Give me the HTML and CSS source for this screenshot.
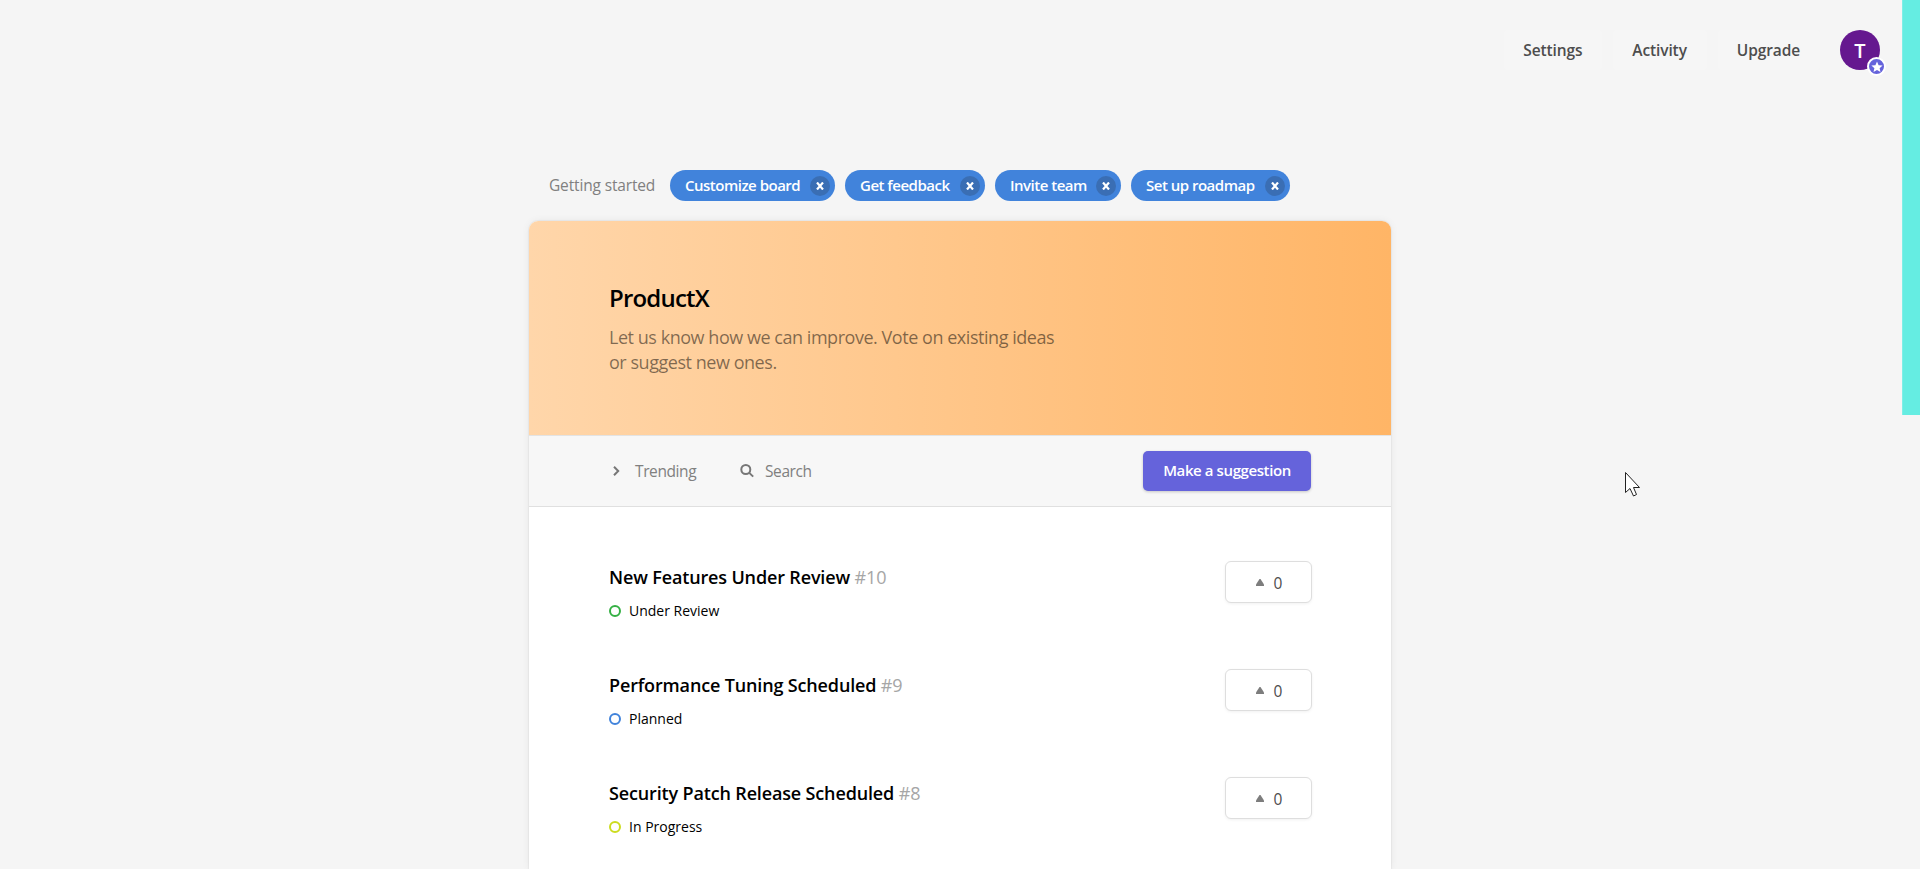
FILE: index.html
```html
<!DOCTYPE html>
<html lang="en">
  <head>
    <meta charset="UTF-8" />
    <meta name="viewport" content="width=device-width, initial-scale=1.0" />
    <title>ProductX</title>
    <link rel="stylesheet" href="styles.css" />
  </head>
  <body>
    <header class="topbar">
      <nav class="nav">
        <a class="nav-link">Settings</a>
        <a class="nav-link">Activity</a>
        <a class="nav-link">Upgrade</a>
      </nav>
      <div class="avatar">
        T
        <span class="avatar-badge">
          <svg viewBox="0 0 24 24" width="12" height="12">
            <path fill="#fff" d="M12 1l3.2 7.4 8 .7-6 5.3 1.8 7.8-7-4.1-7 4.1 1.8-7.8-6-5.3 8-.7z" />
          </svg>
        </span>
      </div>
    </header>

    <main class="page">
      <div class="started">
        <span class="started-label">Getting started</span>
        <button class="pill"><span class="pill-text customize">Customize board</span>
          <span class="pill-close"><svg viewBox="0 0 8 8" width="8" height="8"><path d="M1 0.5L7 7.5M7 0.5L1 7.5" /></svg></span>
        </button>
        <button class="pill"><span class="pill-text feedback">Get feedback</span>
          <span class="pill-close"><svg viewBox="0 0 8 8" width="8" height="8"><path d="M1 0.5L7 7.5M7 0.5L1 7.5" /></svg></span>
        </button>
        <button class="pill"><span class="pill-text invite">Invite team</span>
          <span class="pill-close"><svg viewBox="0 0 8 8" width="8" height="8"><path d="M1 0.5L7 7.5M7 0.5L1 7.5" /></svg></span>
        </button>
        <button class="pill"><span class="pill-text roadmap">Set up roadmap</span>
          <span class="pill-close"><svg viewBox="0 0 8 8" width="8" height="8"><path d="M1 0.5L7 7.5M7 0.5L1 7.5" /></svg></span>
        </button>
      </div>

      <section class="board">
        <div class="hero">
          <h1>ProductX</h1>
          <p>Let us know how we can improve. Vote on existing ideas<br />or suggest new ones.</p>
        </div>

        <div class="toolbar">
          <a class="tool trending">
            <svg viewBox="0 0 14 14" width="14" height="14"><path d="M5 2.8L9.2 7L5 11.2" /></svg>
            Trending
          </a>
          <a class="tool search">
            <svg viewBox="0 0 14 14" width="14" height="14"><circle cx="5.8" cy="5.5" r="4.5" /><path d="M9 8.6L13.2 12.6" /></svg>
            Search
          </a>
          <button class="suggest">Make a suggestion</button>
        </div>

        <ul class="posts">
          <li class="post">
            <div>
              <h2>New Features Under Review <span class="number">#10</span></h2>
              <div class="status review">Under Review</div>
            </div>
            <button class="vote"><svg viewBox="0 0 8 7" width="8" height="7"><path d="M3.5 0H4.5L8 5.5V7H0V5.5z" /></svg>0</button>
          </li>
          <li class="post">
            <div>
              <h2>Performance Tuning Scheduled <span class="number">#9</span></h2>
              <div class="status planned">Planned</div>
            </div>
            <button class="vote"><svg viewBox="0 0 8 7" width="8" height="7"><path d="M3.5 0H4.5L8 5.5V7H0V5.5z" /></svg>0</button>
          </li>
          <li class="post">
            <div>
              <h2>Security Patch Release Scheduled <span class="number">#8</span></h2>
              <div class="status progress">In Progress</div>
            </div>
            <button class="vote"><svg viewBox="0 0 8 7" width="8" height="7"><path d="M3.5 0H4.5L8 5.5V7H0V5.5z" /></svg>0</button>
          </li>
        </ul>
      </section>
    </main>

    <div class="side-strip"></div>
    <svg class="cursor" viewBox="0 0 16 25" width="16" height="25">
      <path d="M.5.5V20.5L5 16.5L8.5 24L11.5 22.5L8.5 15.5H14.5z" />
    </svg>
  </body>
</html>
```

FILE: styles.css
```css
* {
  box-sizing: border-box;
}

body {
  margin: 0;
  background: #f5f5f5;
  color: #000;
  font-family: "Open Sans", "Noto Sans", sans-serif;
  font-size: 15.5px;
}

button {
  border: none;
  font: inherit;
}

.topbar {
  display: flex;
  justify-content: flex-end;
  align-items: center;
  gap: 20px;
  height: 100px;
  padding-right: 40px;
}

.nav {
  display: flex;
  gap: 11px;
}

.nav-link {
  height: 40px;
  padding: 1px 20px 0 19px;
  border-radius: 4px;
  background: #f6f6f6;
  color: #4d4d4d;
  font-weight: 600;
  line-height: 39px;
  letter-spacing: -0.12px;
}

.avatar {
  position: relative;
  width: 40px;
  height: 40px;
  border-radius: 50%;
  background: #65188f;
  color: #fff;
  font-size: 20px;
  font-weight: 600;
  line-height: 42px;
  text-align: center;
}

.avatar-badge {
  position: absolute;
  right: -6px;
  bottom: -6px;
  display: flex;
  align-items: center;
  justify-content: center;
  width: 19px;
  height: 19px;
  border: 2px solid #fff;
  border-radius: 50%;
  background: #6563db;
}

.page {
  width: 862px;
  margin: 0 auto;
  padding-top: 70px;
}

.started {
  display: flex;
  align-items: center;
  gap: 10px;
  height: 31px;
  padding-left: 20px;
  margin-bottom: 20px;
}

.started-label {
  width: 111px;
  padding-bottom: 1px;
  color: #808080;
  letter-spacing: -0.15px;
  white-space: nowrap;
}

.pill {
  display: flex;
  align-items: center;
  gap: 10px;
  height: 31px;
  padding: 0 5px 0 15px;
  border-radius: 16px;
  background: #4183db;
  color: #fff;
  font-size: 15px;
  font-weight: 600;
  white-space: nowrap;
}

.pill-text {
  padding-bottom: 2px;
  letter-spacing: -0.5px;
  text-align: left;
}

.customize {
  width: 115px;
}

.feedback {
  width: 90px;
}

.invite {
  width: 76px;
}

.roadmap {
  width: 109px;
}

.pill-close {
  display: flex;
  align-items: center;
  justify-content: center;
  width: 20px;
  height: 20px;
  border-radius: 50%;
  background: #3a6eb4;
}

.pill-close path {
  fill: none;
  stroke: #fff;
  stroke-width: 2.2;
}

.board {
  height: 648px;
  border-radius: 9px 9px 0 0;
  background: #fff;
  box-shadow: 0 0 1px 1px rgba(0, 0, 0, 0.04), 0 0 8px rgba(0, 0, 0, 0.06);
  clip-path: inset(-10px -10px 0);
}

.hero {
  height: 214px;
  padding: 59px 80px 0;
  border-radius: 9px 9px 0 0;
  background: linear-gradient(to right, #ffd6aa, #ffb566);
}

.hero h1 {
  margin: 0;
  font-size: 24px;
  font-weight: 600;
  line-height: 36px;
  letter-spacing: -0.8px;
}

.hero p {
  margin: 9px 0 0;
  color: rgba(0, 0, 0, 0.5);
  font-size: 18px;
  line-height: 25px;
  letter-spacing: -0.46px;
}

.toolbar {
  display: flex;
  align-items: center;
  height: 72px;
  padding: 0 80px;
  border-top: 1px solid #e3e3e3;
  border-bottom: 1px solid #e0e0e0;
  background: #f7f7f7;
}

.tool {
  display: flex;
  align-items: center;
  gap: 12px;
  color: #808080;
  letter-spacing: -0.4px;
}

.tool svg {
  fill: none;
  stroke: #777;
  stroke-width: 2;
}

.trending {
  width: 131px;
}

.search {
  gap: 11px;
}

.suggest {
  width: 168px;
  height: 40px;
  margin-left: auto;
  padding: 0 0 2px;
  border-radius: 5px;
  background: #6563db;
  box-shadow: 0 1px 3px rgba(0, 0, 0, 0.2);
  color: #fff;
  font-size: 15px;
  font-weight: 600;
  letter-spacing: -0.4px;
}

.posts {
  display: flex;
  flex-direction: column;
  gap: 46px;
  margin: 0;
  padding: 54px 79px 0 80px;
  list-style: none;
}

.post {
  display: flex;
  justify-content: space-between;
  height: 62px;
}

.post h2 {
  margin: 3px 0 0;
  font-size: 18px;
  font-weight: 600;
  line-height: 26px;
  letter-spacing: -0.15px;
}

.number {
  color: #a6a6a6;
  font-weight: 400;
}

.status {
  display: flex;
  align-items: center;
  gap: 8px;
  margin-top: 11px;
  font-size: 14px;
  line-height: 20px;
}

.status::before {
  content: "";
  box-sizing: border-box;
  width: 12px;
  height: 12px;
  border: 2px solid;
  border-radius: 50%;
}

.review::before {
  border-color: #35b044;
}

.planned::before {
  border-color: #4183db;
}

.progress::before {
  border-color: #ccdc1f;
}

.vote {
  display: flex;
  align-items: center;
  justify-content: center;
  gap: 10px;
  width: 87px;
  height: 42px;
  padding: 1px 0 0 1px;
  border: 1px solid #dedede;
  border-radius: 6px;
  background: #fff;
  box-shadow: 0 1px 3px rgba(0, 0, 0, 0.06);
  color: #4d4d4d;
  font-weight: 500;
}

.vote path {
  fill: #7d7d7d;
}

/* overlays */
.side-strip {
  position: absolute;
  top: 0;
  right: 0;
  width: 18px;
  height: 415px;
  border-left: 1px solid #7eefe6;
  background: #65ede2;
}

.cursor {
  position: absolute;
  top: 472px;
  left: 1625px;
  fill: #fff;
  stroke: #222;
}
```
